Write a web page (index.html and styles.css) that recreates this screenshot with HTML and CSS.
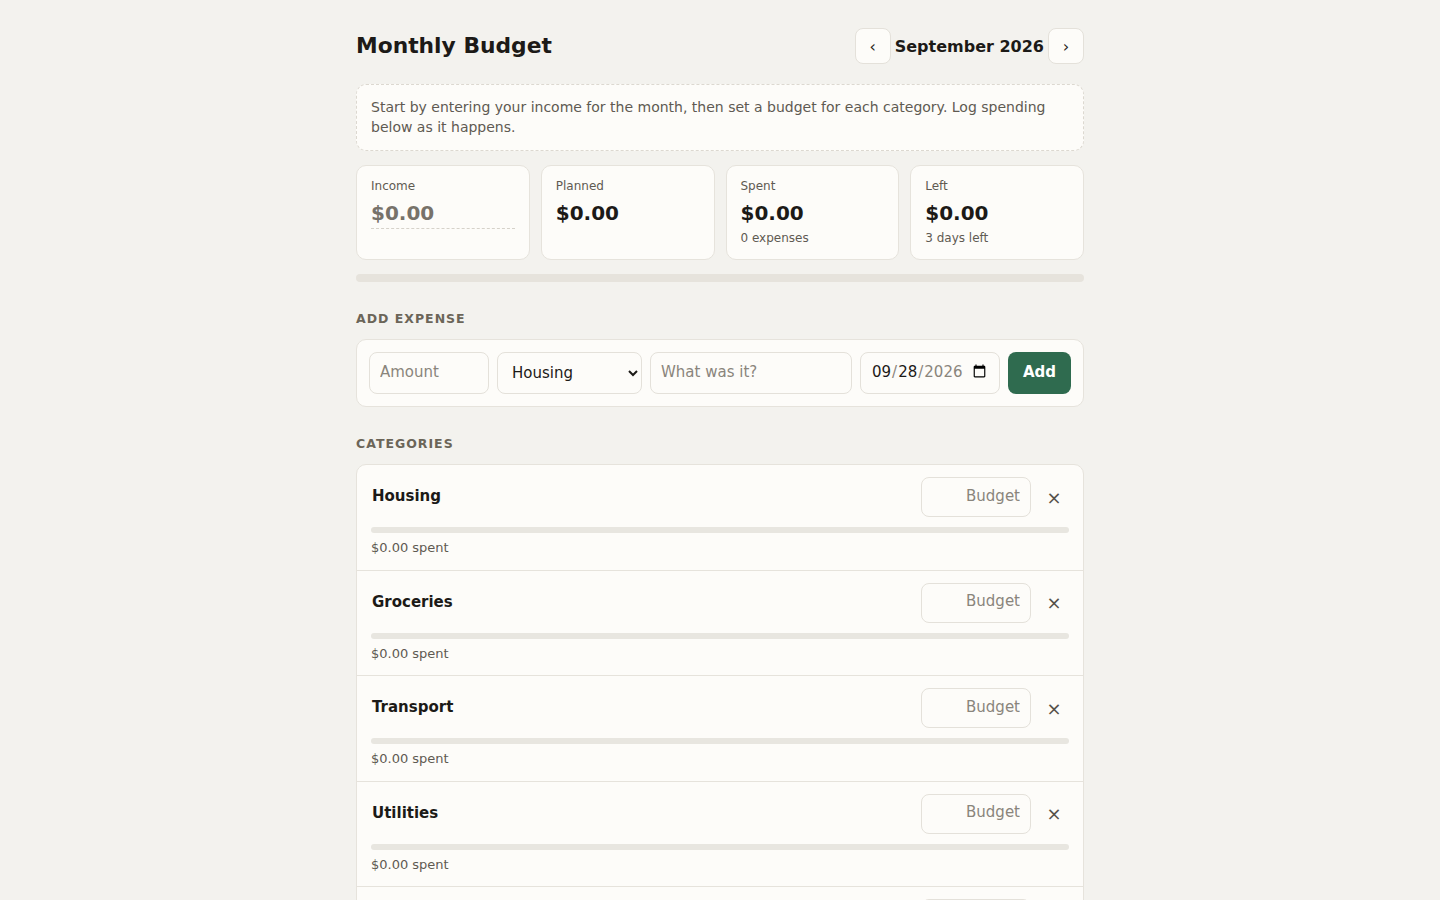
FILE: index.html
```html
<!DOCTYPE html>
<html lang="en">
<head>
<meta charset="utf-8">
<title>Monthly Budget</title>
<link rel="stylesheet" href="styles.css">
</head>
<body>
<main class="app">
  <header class="top">
    <h1 class="title">Monthly Budget</h1>
    <div class="month-nav">
      <button class="nav-btn" aria-label="Previous month">&lsaquo;</button>
      <span class="month">September 2026</span>
      <button class="nav-btn" aria-label="Next month">&rsaquo;</button>
    </div>
  </header>

  <p class="hint">Start by entering your income for the month, then set a budget for each category. Log spending below as it happens.</p>

  <section class="stats">
    <div class="stat">
      <div class="stat-label">Income</div>
      <input class="income-input" type="text" placeholder="$0.00">
    </div>
    <div class="stat">
      <div class="stat-label">Planned</div>
      <div class="stat-value">$0.00</div>
    </div>
    <div class="stat">
      <div class="stat-label">Spent</div>
      <div class="stat-value">$0.00</div>
      <div class="stat-sub">0 expenses</div>
    </div>
    <div class="stat">
      <div class="stat-label">Left</div>
      <div class="stat-value">$0.00</div>
      <div class="stat-sub">3 days left</div>
    </div>
  </section>

  <div class="overall-bar"><div class="overall-fill" style="width:0%"></div></div>

  <h2 class="section-label">Add expense</h2>
  <form class="expense-form">
    <input class="field f-amount" type="text" placeholder="Amount">
    <select class="field f-cat">
      <option>Housing</option>
      <option>Groceries</option>
      <option>Transport</option>
      <option>Utilities</option>
    </select>
    <input class="field f-desc" type="text" placeholder="What was it?">
    <input class="field f-date" type="date" value="2026-09-28">
    <button class="add-btn" type="button">Add</button>
  </form>

  <h2 class="section-label">Categories</h2>
  <section class="cat-list">
    <div class="cat">
      <div class="cat-head">
        <span class="cat-name">Housing</span>
        <input class="budget-input" type="text" placeholder="Budget">
        <button class="remove" aria-label="Remove">&times;</button>
      </div>
      <div class="cat-bar"><div class="cat-fill" style="width:0%"></div></div>
      <div class="cat-spent">$0.00 spent</div>
    </div>
    <div class="cat">
      <div class="cat-head">
        <span class="cat-name">Groceries</span>
        <input class="budget-input" type="text" placeholder="Budget">
        <button class="remove" aria-label="Remove">&times;</button>
      </div>
      <div class="cat-bar"><div class="cat-fill" style="width:0%"></div></div>
      <div class="cat-spent">$0.00 spent</div>
    </div>
    <div class="cat">
      <div class="cat-head">
        <span class="cat-name">Transport</span>
        <input class="budget-input" type="text" placeholder="Budget">
        <button class="remove" aria-label="Remove">&times;</button>
      </div>
      <div class="cat-bar"><div class="cat-fill" style="width:0%"></div></div>
      <div class="cat-spent">$0.00 spent</div>
    </div>
    <div class="cat">
      <div class="cat-head">
        <span class="cat-name">Utilities</span>
        <input class="budget-input" type="text" placeholder="Budget">
        <button class="remove" aria-label="Remove">&times;</button>
      </div>
      <div class="cat-bar"><div class="cat-fill" style="width:0%"></div></div>
      <div class="cat-spent">$0.00 spent</div>
    </div>
    <div class="cat">
      <div class="cat-head">
        <span class="cat-name">Dining out</span>
        <input class="budget-input" type="text" placeholder="Budget">
        <button class="remove" aria-label="Remove">&times;</button>
      </div>
      <div class="cat-bar"><div class="cat-fill" style="width:0%"></div></div>
      <div class="cat-spent">$0.00 spent</div>
    </div>
  </section>
</main>
</body>
</html>
```

FILE: styles.css
```css
* { box-sizing: border-box; }

html, body {
  margin: 0;
  background: #f3f2ee;
  color: #1f1d1a;
  font-family: "DejaVu Sans", "Noto Sans", sans-serif;
}

.app {
  width: 728px;
  margin: 0 auto;
  padding: 28px 0 40px;
}

/* header */
.top {
  display: flex;
  align-items: center;
  justify-content: space-between;
  height: 36px;
}
.title {
  margin: 0 0 2px;
  font-size: 21.8px;
  font-weight: 700;
  color: #1c1a17;
}
.month-nav {
  display: flex;
  align-items: center;
  gap: 4px;
}
.month {
  font-size: 16px;
  font-weight: 700;
  color: #1c1a17;
}
.nav-btn {
  width: 36px;
  height: 36px;
  border: 1px solid #e4e1da;
  border-radius: 8px;
  background: #fdfcf9;
  font-family: inherit;
  font-size: 16px;
  color: #2a2724;
  padding: 0;
  cursor: pointer;
}

/* intro note */
.hint {
  margin: 20px 0 0;
  padding: 12px 14px 13px;
  border: 1px dashed #dcd8d0;
  border-radius: 10px;
  background: #fdfcf9;
  font-size: 14px;
  line-height: 20px;
  color: #5f5a52;
}

/* summary cards */
.stats {
  display: grid;
  grid-template-columns: repeat(4, 1fr);
  gap: 11px;
  margin-top: 14px;
}
.stat {
  height: 95px;
  padding: 12px 14px 10px;
  border: 1px solid #e6e3dc;
  border-radius: 10px;
  background: #fdfcf9;
}
.stat-label {
  font-size: 12px;
  line-height: 16px;
  color: #5f5a52;
}
.stat-value {
  margin-top: 6px;
  font-size: 20px;
  font-weight: 700;
  line-height: 26px;
  color: #1c1a17;
}
.stat-sub {
  margin-top: 4px;
  font-size: 12px;
  line-height: 17px;
  color: #5f5a52;
}
.income-input {
  display: block;
  width: 100%;
  margin-top: 4px;
  padding: 0;
  height: 31px;
  border: 0;
  border-bottom: 1px dashed #d6d2ca;
  background: transparent;
  font-family: inherit;
  font-size: 20px;
  font-weight: 700;
  color: #1c1a17;
  outline: none;
}
.income-input::placeholder { color: #77726a; }

.overall-bar {
  margin-top: 14px;
  height: 8px;
  border-radius: 4px;
  background: #e6e3dc;
  overflow: hidden;
}
.overall-fill { height: 100%; background: #2f6b4f; }

/* section labels */
.section-label {
  margin: 29px 0 12px;
  font-size: 12.5px;
  line-height: 16px;
  font-weight: 700;
  letter-spacing: 1px;
  text-transform: uppercase;
  color: #6b6558;
}

/* expense form */
.expense-form {
  display: flex;
  gap: 8px;
  margin: 0;
  padding: 12px;
  border: 1px solid #e6e3dc;
  border-radius: 10px;
  background: #fdfcf9;
}
.field {
  height: 42px;
  border: 1px solid #e4e1da;
  border-radius: 8px;
  background: #fdfcf9;
  font-family: inherit;
  font-size: 15px;
  color: #1c1a17;
  padding: 0 10px 3px;
}
.field::placeholder { color: #8a857c; }
.f-amount { width: 120px; }
.f-cat { width: 145px; padding: 0 8px 0 10px; }
.f-desc { width: 202px; }
.f-date { width: 140px; padding: 0 10px 3px; color: #8a857c; }
.f-date::-webkit-datetime-edit-month-field,
.f-date::-webkit-datetime-edit-day-field { color: #1c1a17; }
.f-date::-webkit-datetime-edit-year-field { color: #8a857c; }
.add-btn {
  width: 63px;
  height: 42px;
  padding: 0 0 3px;
  border: 0;
  border-radius: 8px;
  background: #2f6b4f;
  color: #fff;
  font-family: inherit;
  font-size: 15px;
  font-weight: 700;
  cursor: pointer;
}

/* category list */
.cat-list {
  border: 1px solid #e6e3dc;
  border-radius: 10px 10px 0 0;
  background: #fdfcf9;
  overflow: hidden;
}
.cat {
  padding: 12px 14px 11.5px;
  border-top: 1px solid #e6e3dc;
}
.cat:first-child { border-top: 0; }
.cat-head {
  display: flex;
  align-items: center;
  gap: 8px;
}
.cat-name {
  flex: 1;
  padding: 0 0 2px 1px;
  font-size: 15px;
  font-weight: 700;
  color: #1c1a17;
}
.budget-input {
  width: 110px;
  height: 40px;
  padding: 0 10px 3px;
  border: 1px solid #e4e1da;
  border-radius: 8px;
  background: #fdfcf9;
  font-family: inherit;
  font-size: 15px;
  text-align: right;
}
.budget-input::placeholder { color: #8a857c; }
.remove {
  width: 30px;
  height: 30px;
  padding: 0;
  border: 0;
  background: transparent;
  font-family: inherit;
  font-size: 18px;
  color: #55514a;
  cursor: pointer;
}
.cat-bar {
  margin-top: 10px;
  height: 6px;
  border-radius: 3px;
  background: #e8e6e0;
  overflow: hidden;
}
.cat-fill { height: 100%; background: #2f6b4f; }
.cat-spent {
  margin-top: 5px;
  font-size: 13px;
  line-height: 20px;
  color: #5f5a52;
}
```
